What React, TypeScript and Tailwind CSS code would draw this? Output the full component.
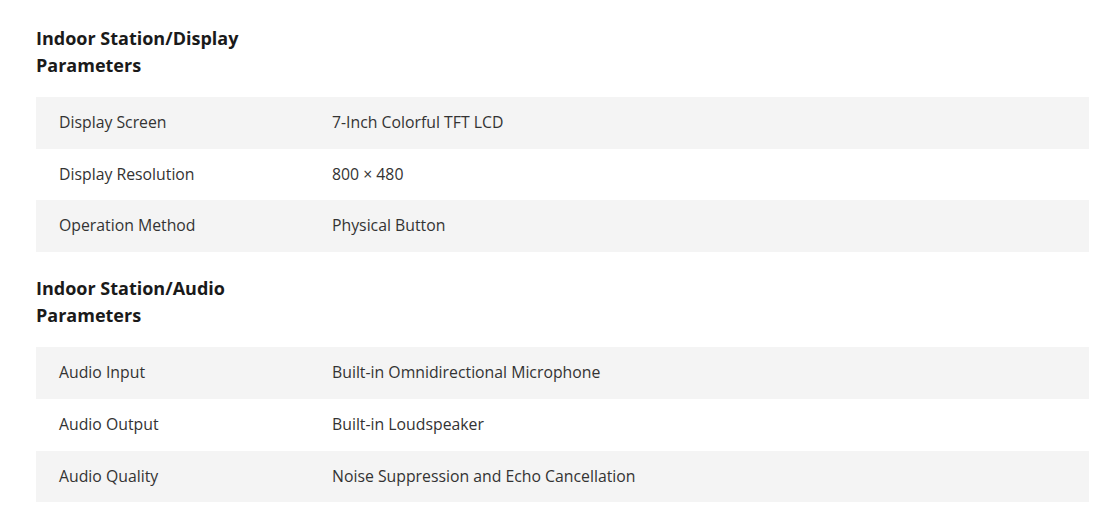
const sections = [
  {
    title: 'Indoor Station/Display Parameters',
    rows: [
      ['Display Screen', '7-Inch Colorful TFT LCD'],
      ['Display Resolution', '800 × 480'],
      ['Operation Method', 'Physical Button'],
    ],
  },
  {
    title: 'Indoor Station/Audio Parameters',
    rows: [
      ['Audio Input', 'Built-in Omnidirectional Microphone'],
      ['Audio Output', 'Built-in Loudspeaker'],
      ['Audio Quality', 'Noise Suppression and Echo Cancellation'],
    ],
  },
];

export default function App() {
  return (
    <div
      className="min-h-[523px] w-[1114px] bg-white pl-[36px] pr-[25px] pt-[25px]"
      style={{ fontFamily: '"Open Sans", sans-serif' }}
    >
      {sections.map((section, i) => (
        <div key={section.title} className={i > 0 ? 'mt-[23px]' : ''}>
          {/* 섹션 제목 */}
          <h3 className="w-[230px] text-[18px] font-bold leading-[27px] text-[#1a1a1a]">
            {section.title}
          </h3>
          <table className="mt-[18px] w-full border-collapse">
            <tbody>
              {section.rows.map(([label, value], j) => (
                <tr key={label} className={j % 2 === 0 ? 'bg-[#f4f4f4]' : 'bg-white'}>
                  <td className="w-[296px] py-[15px] pl-[23px] text-[15.8px] leading-[21.7px] text-[#333]">
                    {label}
                  </td>
                  <td className="py-[15px] text-[15.8px] leading-[21.7px] text-[#333]">
                    {value}
                  </td>
                </tr>
              ))}
            </tbody>
          </table>
        </div>
      ))}
    </div>
  );
}
